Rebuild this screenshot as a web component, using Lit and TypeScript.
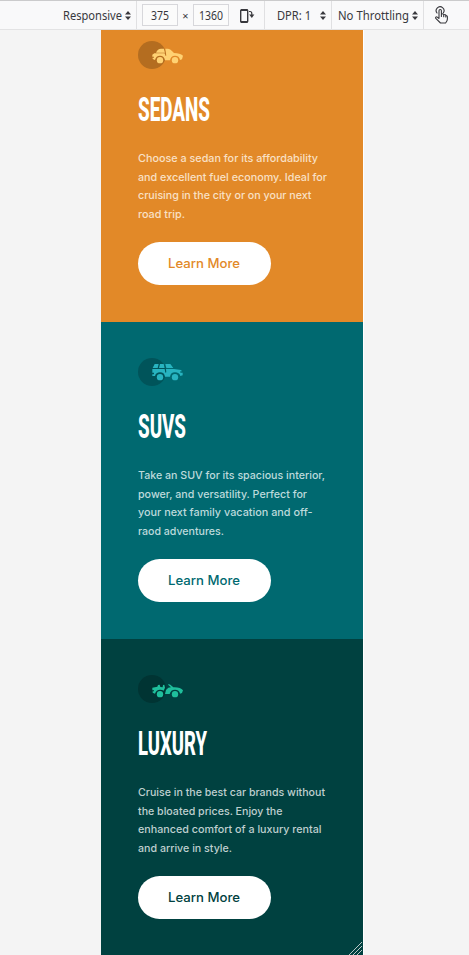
import { LitElement, html, css, svg } from "lit";
import { customElement, property } from "lit/decorators.js";

interface Line { text: string; width: number; }
interface Card {
  kind: string; title: string; titleWidth: number; lines: Line[];
}

const cards: Card[] = [
  { kind: "sedans", title: "SEDANS", titleWidth: 72, lines: [
    { text: "Choose a sedan for its affordability", width: 180 },
    { text: "and excellent fuel economy. Ideal for", width: 189 },
    { text: "cruising in the city or on your next", width: 173.5 },
    { text: "road trip.", width: 47 },
  ] },
  { kind: "suvs", title: "SUVS", titleWidth: 48, lines: [
    { text: "Take an SUV for its spacious interior,", width: 187 },
    { text: "power, and versatility. Perfect for", width: 169 },
    { text: "your next family vacation and off-", width: 174.5 },
    { text: "raod adventures.", width: 86 },
  ] },
  { kind: "luxury", title: "LUXURY", titleWidth: 69, lines: [
    { text: "Cruise in the best car brands without", width: 187 },
    { text: "the bloated prices. Enjoy the", width: 144.5 },
    { text: "enhanced comfort of a luxury rental", width: 183.5 },
    { text: "and arrive in style.", width: 94 },
  ] },
];

const wheels = svg`<circle cx="90" cy="81.5" r="9.5"/><circle cx="135" cy="81.5" r="9.5"/>`;

const cars: Record<string, unknown> = {
  sedans: svg`
    <path d="M78 59 Q83 47 93 47 H102 Q103 53 105 59 Z"/>
    <path d="M106 47 H113 Q121 47 132 60 Q150 60 159 68 L156 79 L150 81 Q148 68 135 68 Q122 68 120 82 H105 Q103 68 90 68 Q78 68 75 81 L68 78 V74 H72 V71 H67 V65 L73 61 H104 L107 69 L109 68 Z"/>`,
  suvs: svg`
    <path d="M74 42 H86 L83 54 H68 Z M90 42 H101 L104 54 H87 Z M106 42 H121 L130 54 H109 Z"/>
    <path d="M67 57 H104 L106 68 L109 67 L108 57 H132 L153 60 L156 64 H151 V68 H158 V76 L151 78 Q148 67 135 67 Q122 67 120 80 H105 Q103 67 90 67 Q78 67 75 78 H67 V73 H72 V68 H67 Z"/>`,
  luxury: svg`
    <path d="M67 62 L82 59 L84 54 L89 53 L91 60 L98 61 L99 54 L103 53 L105 62 L101 71 Q97 68 90 68 Q79 68 75 80 L68 77 V73 H72 V70 H67 Z"/>
    <path d="M115 51 L121 53 L130 61 Q151 60 159 70 L156 78 L150 80 Q148 68 135 68 Q122 68 119 81 H105 L108 69 L115 62 L123 61 L115 54 Z"/>`,
};

/** A single run of text set to a given measure. */
@customElement("measured-text")
export class MeasuredText extends LitElement {
  @property() text = "";
  @property({ type: Number }) width = 0;
  @property({ type: Number }) height = 0;
  @property({ type: Number }) baseline = 0;
  static styles = css`
    :host { display: block; }
    svg { display: block; overflow: visible; }
    text { fill: currentColor; }
  `;
  render() {
    return html`<svg width=${this.width} height=${this.height}>
      <text x="0" y=${this.baseline} textLength=${this.width} lengthAdjust="spacingAndGlyphs">${this.text}</text>
    </svg>`;
  }
}

@customElement("car-card")
export class CarCard extends LitElement {
  @property({ attribute: false }) card!: Card;
  static styles = css`
    :host { display: block; }
    .card { box-sizing: border-box; height: 317px; padding: 36px 37px 0; color: #fff; }
    .sedans { background: #e28928; --disc: #b46d20; --car: #ffd273; --accent: #e28928; --copy: #f9e0c5; }
    .suvs { background: #006970; --disc: #00545a; --car: #28b4c0; --accent: #006970; --copy: #bddadc; }
    .luxury { background: #004140; --disc: #003433; --car: #1fbf9c; --accent: #004140; --copy: #bfcfcf; }
    .icon { display: block; width: 46px; height: 28px; }
    .disc { fill: var(--disc); }
    .car { fill: var(--car); }
    .title { margin-top: 16px; height: 47px; font: 800 34px Roboto, "Open Sans", sans-serif; }
    .copy { margin-top: 17px; height: 75px; color: var(--copy); font: 500 10.8px Inter, sans-serif; }
    .button { display: flex; align-items: flex-start; box-sizing: border-box; width: 132.5px; height: 42.5px;
      margin-top: 18px; padding: 11px 0 0 30px; border: 0; border-radius: 22px; background: #fff;
      color: var(--accent); font: 500 12.8px Inter, sans-serif; }
  `;
  render() {
    const c = this.card;
    return html`<section class="card ${c.kind}">
      <svg class="icon" viewBox="24 24 138 84">
        <circle class="disc" cx="66" cy="66" r="42"/>
        <g class="car">${cars[c.kind]}${wheels}</g>
      </svg>
      <measured-text class="title" .text=${c.title} .width=${c.titleWidth} .height=${47} .baseline=${36.2}></measured-text>
      <div class="copy">${c.lines.map(l => html`
        <measured-text .text=${l.text} .width=${l.width} .height=${18.67} .baseline=${13}></measured-text>`)}
      </div>
      <button class="button">
        <measured-text .text=${"Learn More"} .width=${72} .height=${20} .baseline=${15}></measured-text>
      </button>
    </section>`;
  }
}

@customElement("app-root")
export class AppRoot extends LitElement {
  static styles = css`
    :host { display: flex; flex-direction: column; height: 955px; overflow: hidden; background: #f4f4f4; }
    .bar { box-sizing: border-box; flex: none; height: 30px; display: grid;
      grid-template-columns: 137px 128px 67px 92px 1fr; background: #f9f9fa;
      border-top: 1px solid #cbcbcc; border-bottom: 1px solid #e3e3e4;
      color: #38383d; font: 12px "Noto Sans", sans-serif; }
    .cell { display: flex; align-items: center; box-sizing: border-box; border-right: 1px solid #e0e0e2; }
    .cell:last-child { border: 0; padding-left: 10px; }
    .mode { padding-left: 63px; gap: 3px; }
    .size { padding-left: 5px; }
    .dpr { padding-left: 12px; gap: 9px; }
    .net { padding-left: 6px; gap: 3px; }
    .field { box-sizing: border-box; display: flex; align-items: center; justify-content: center;
      width: 36px; height: 22px; border: 1px solid #d7d7db; background: #fbfbfb; }
    .times { width: 15px; text-align: center; font-size: 11px; }
    .glyph { flex: none; display: block; fill: none; stroke: #38383d; }
    .rotate { margin-left: 10px; }
    .arrows { fill: #38383d; stroke: none; }
    .stage { flex: 1; min-height: 0; display: flex; width: 363px; border-right: 1px solid #fff; }
    .viewport { position: relative; flex: none; width: 262px; margin-left: 101px; overflow: hidden;
      display: flex; flex-direction: column; justify-content: flex-end; }
    .stack { margin-bottom: -1px; }
    .grip { position: absolute; right: 1px; bottom: 0; fill: none; stroke: #b8c5c5; }
  `;
  private arrows() {
    return html`<svg class="glyph arrows" width="6" height="9" viewBox="0 0 6 9"><path d="M0 3.5 L3 0 L6 3.5Z M0 5.5 H6 L3 9Z"/></svg>`;
  }
  private label(text: string, width: number) {
    return html`<measured-text .text=${text} .width=${width} .height=${18} .baseline=${13.5}></measured-text>`;
  }
  render() {
    return html`
      <header class="bar">
        <div class="cell mode">${this.label("Responsive", 59)}${this.arrows()}</div>
        <div class="cell size">
          <span class="field">${this.label("375", 18)}</span>
          <span class="times">×</span>
          <span class="field">${this.label("1360", 24)}</span>
          <svg class="glyph rotate" width="17" height="16" viewBox="0 0 17 16">
            <rect x="1.7" y="2.7" width="7" height="12.6" rx="1" stroke-width="1.4"/>
            <path d="M2 3 H8.5 M2 14.8 H8.5" stroke-width="1.8"/>
            <path d="M10 4.5 H11 Q12.8 4.5 12.8 6.5 V9" stroke-width="1.2"/>
            <path class="arrows" d="M10.2 7.5 H15.4 L12.8 11Z"/>
          </svg>
        </div>
        <div class="cell dpr">${this.label("DPR: 1", 34)}${this.arrows()}</div>
        <div class="cell net">${this.label("No Throttling", 71)}${this.arrows()}</div>
        <div class="cell">
          <svg class="glyph" width="15" height="18" viewBox="0 0 15 18" stroke-width="1.1" stroke-linejoin="round" stroke-linecap="round">
            <path d="M5 12 V4.8 Q5 3.5 6.2 3.5 Q7.4 3.5 7.4 4.8 V9 V8.4 Q8.6 7.2 9.7 8.5 V9.5 V8.9 Q10.9 8 11.8 9.1 V10 Q13.4 9.2 13.4 11 V13 Q13.4 15 11.6 17 H6.5 L1.8 12.4 Q1.2 11.4 2.1 10.9 Q2.8 10.5 5 12.5 M7.4 9 V10.5 M9.7 9.5 V10.7 M11.8 10 V11"/>
            <path d="M3 7 A3.9 3.9 0 1 1 9.4 6.7"/>
          </svg>
        </div>
      </header>
      <div class="stage"><main class="viewport">
        <div class="stack">${cards.map(c => html`<car-card .card=${c}></car-card>`)}</div>
        <svg class="grip" width="13" height="13" viewBox="0 0 13 13"><path d="M0 13 L13 0 M4 13 L13 4 M8 13 L13 8"/></svg>
      </main></div>`;
  }
}
